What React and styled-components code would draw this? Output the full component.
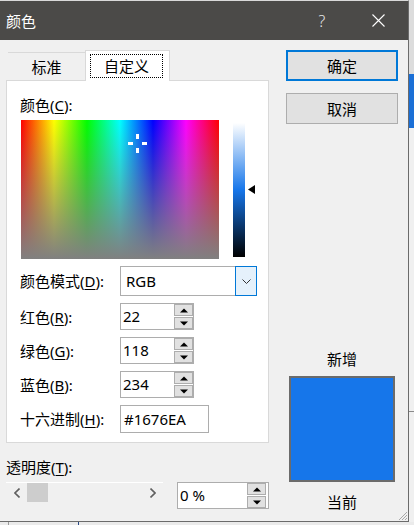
import React from "react";
import styled, { createGlobalStyle } from "styled-components";

const GlobalStyle = createGlobalStyle`
  html, body { margin: 0; padding: 0; }
  body {
    background: #e6e6e6;
    font-family: "Noto Sans", "Noto Sans CJK SC", sans-serif;
    color: #000;
  }
  * { box-sizing: border-box; }
`;

const Page = styled.div`
  width: 414px;
  height: 525px;
  overflow: hidden;
  display: grid;
  grid-template-columns: 409px 5px;
  grid-template-rows: 522px 3px;
`;

const Dialog = styled.div`
  position: relative;
  display: flex;
  flex-direction: column;
  background: #f0f0f0;
  border-top: 1px solid #d9d9d9;
  border-right: 1px solid #6b6b6b;
  border-bottom: 1px solid #6b6b6b;
`;

const TitleBar = styled.div`
  height: 39px;
  flex: none;
  display: flex;
  align-items: center;
  background: #4b4a48;
  color: #fff;
  padding: 0 2px 0 6px;
`;

const TitleText = styled.div`
  flex: 1;
  font-size: 15px;
  line-height: 18px;
`;

const TitleButton = styled.div`
  width: 56px;
  height: 39px;
  display: flex;
  align-items: center;
  justify-content: center;
  color: #e8e8e8;
  font-size: 16px;
  font-weight: 300;
`;

const Body = styled.div`
  flex: 1;
  display: flex;
  padding: 10px 10px 0 6px;
  gap: 17px;
`;

const LeftCol = styled.div`
  width: 263px;
  display: flex;
  flex-direction: column;
`;

const TabStrip = styled.div`
  height: 30px;
  display: flex;
  align-items: flex-end;
  padding-left: 2px;
  position: relative;
  z-index: 1;
`;

const Tab = styled.div`
  width: ${(p) => p.$w}px;
  height: ${(p) => (p.$active ? 31 : 28)}px;
  display: flex;
  font-size: 15px;
  line-height: 18px;
  background: ${(p) => (p.$active ? "#fff" : "transparent")};
  border-top: 1px solid #d9d9d9;
  border-left: ${(p) => (p.$active ? "1px solid #d9d9d9" : "none")};
  border-right: ${(p) => (p.$active ? "1px solid #d9d9d9" : "none")};
  margin-bottom: ${(p) => (p.$active ? -1 : 0)}px;
  padding: ${(p) => (p.$active ? "3px 6px 3px 4px" : "0")};
  align-items: center;
  justify-content: center;
`;

const FocusBox = styled.div`
  flex: 1;
  align-self: stretch;
  display: flex;
  align-items: center;
  justify-content: center;
  border: 1px dotted #000;
`;

const Panel = styled.div`
  height: 363px;
  background: #fff;
  border: 1px solid #d9d9d9;
  padding: 15px 0 0 13px;
  display: flex;
  flex-direction: column;
`;

const Label = styled.div`
  font-size: 15px;
  line-height: 18px;
  height: 18px;
  white-space: nowrap;
  u { text-underline-offset: 2px; }
`;

const PickerRow = styled.div`
  display: flex;
  align-items: flex-start;
  margin-top: 6px;
  padding-left: 1px;
`;

const Spectrum = styled.div`
  position: relative;
  width: 198px;
  height: 139px;
  background:
    linear-gradient(to bottom, rgba(128,128,128,0) 0%, rgba(128,128,128,1) 100%),
    linear-gradient(to right, #ff0000 0%, #ffff00 16.67%, #00ff00 33.33%, #00ffff 50%, #0000ff 66.67%, #ff00ff 83.33%, #ff0000 100%);
`;

const Crosshair = styled.svg`
  position: absolute;
  left: 107px;
  top: 14px;
`;

const LumBar = styled.div`
  width: 12px;
  height: 134px;
  margin: 3px 0 0 14px;
  background: linear-gradient(to bottom, #ffffff 0%, #1676ea 50%, #000000 100%);
`;

const LumArrow = styled.svg`
  margin: 65px 0 0 3px;
`;

const Form = styled.div`
  display: flex;
  flex-direction: column;
  gap: 7px;
  margin-top: 7px;
`;

const FormRow = styled.div`
  display: flex;
  align-items: center;
  height: ${(p) => p.$h}px;
`;

const FormLabel = styled(Label)`
  width: 100px;
`;

const SelectBox = styled.div`
  width: 137px;
  height: 30px;
  display: flex;
  border: 1px solid #adadad;
  background: #fff;
`;

const SelectText = styled.div`
  flex: 1;
  padding-left: 5px;
  font-size: 15px;
  line-height: 28px;
`;

const DropButton = styled.div`
  width: 22px;
  margin: -1px -1px -1px 0;
  border: 1px solid #0078d7;
  background: #e5f1fb;
  display: flex;
  align-items: center;
  justify-content: center;
`;

const SpinBox = styled.div`
  width: ${(p) => p.$w}px;
  height: 27px;
  display: flex;
  border: 1px solid #adadad;
  background: #fff;
  padding-right: ${(p) => p.$pr || 0}px;
`;

const SpinText = styled.div`
  flex: 1;
  padding-left: 2px;
  font-size: 15px;
  line-height: 25px;
`;

const SpinButtons = styled.div`
  width: 19px;
  display: flex;
  flex-direction: column;
  gap: 1px;
`;

const SpinButton = styled.div`
  flex: 1;
  border: 1px solid #adadad;
  background: #e1e1e1;
  display: flex;
  align-items: center;
  justify-content: center;
`;

const TextBox = styled.div`
  width: 89px;
  height: 28px;
  border: 1px solid #adadad;
  background: #fff;
  padding-left: 3px;
  font-size: 15px;
  line-height: 26px;
`;

const TransLabel = styled(Label)`
  margin-top: 15px;
`;

const TransRow = styled.div`
  display: flex;
  align-items: flex-start;
  gap: 14px;
  margin-top: 6px;
`;

const ScrollBar = styled.div`
  width: 159px;
  height: 21px;
  display: flex;
  border-top: 1px solid #fff;
  background: #f0f0f0;
`;

const ScrollArrow = styled.div`
  width: 21px;
  display: flex;
  align-items: center;
  justify-content: center;
`;

const ScrollThumb = styled.div`
  width: 21px;
  height: 19px;
  background: #cdcdcd;
`;

const ScrollTrack = styled.div`
  flex: 1;
`;

const RightCol = styled.div`
  width: 112px;
  display: flex;
  flex-direction: column;
`;

const Button = styled.div`
  height: 31px;
  display: flex;
  align-items: center;
  justify-content: center;
  font-size: 15px;
  background: #e1e1e1;
  border: ${(p) => (p.$default ? "2px solid #0078d7" : "1px solid #adadad")};
  margin-top: ${(p) => p.$mt || 0}px;
`;

const SwatchLabel = styled(Label)`
  text-align: center;
  margin-top: ${(p) => p.$mt}px;
  margin-left: 3px;
  width: 106px;
`;

const Swatch = styled.div`
  width: 106px;
  height: 106px;
  margin: 8px 0 0 3px;
  border: 2px solid #6b6b6b;
  background: #1676ea;
`;

const Grip = styled.svg`
  position: absolute;
  right: 0;
  bottom: 0;
`;

const Backdrop = styled.div`
  display: flex;
  flex-direction: column;
`;

const BackSeg = styled.div`
  height: ${(p) => (p.$h ? `${p.$h}px` : "auto")};
  flex: ${(p) => (p.$h ? "none" : 1)};
  background: ${(p) => p.$c};
`;

const BottomStrip = styled.div`
  grid-column: 1 / 3;
  display: flex;
  background: #ebebeb;
`;

const StripLine = styled.div`
  width: 1px;
  margin-left: ${(p) => p.$ml}px;
  background: ${(p) => p.$c};
`;

const Up = () => (
  <svg width="8" height="5" viewBox="0 0 8 5">
    <polygon points="0,4.5 8,4.5 4,0.5" fill="#000" />
  </svg>
);
const Down = () => (
  <svg width="8" height="5" viewBox="0 0 8 5">
    <polygon points="0,0.5 8,0.5 4,4.5" fill="#000" />
  </svg>
);

function Spin({ value, w = 74, pr = 0 }) {
  return (
    <SpinBox $w={w} $pr={pr}>
      <SpinText>{value}</SpinText>
      <SpinButtons>
        <SpinButton><Up /></SpinButton>
        <SpinButton><Down /></SpinButton>
      </SpinButtons>
    </SpinBox>
  );
}

export default function App() {
  return (
    <>
      <GlobalStyle />
      <Page>
        <Dialog>
          <TitleBar>
            <TitleText>颜色</TitleText>
            <TitleButton>?</TitleButton>
            <TitleButton>
              <svg width="13" height="13" viewBox="0 0 13 13">
                <path d="M0.5 0.5 L12.5 12.5 M12.5 0.5 L0.5 12.5" stroke="#fff" strokeWidth="1.1" />
              </svg>
            </TitleButton>
          </TitleBar>
          <Body>
            <LeftCol>
              <TabStrip>
                <Tab $w={77}>标准</Tab>
                <Tab $w={85} $active>
                  <FocusBox>自定义</FocusBox>
                </Tab>
              </TabStrip>
              <Panel>
                <Label>颜色(<u>C</u>):</Label>
                <PickerRow>
                  <Spectrum>
                    <Crosshair width="19" height="19" viewBox="0 0 19 19">
                      <rect x="8" y="0" width="3" height="5" fill="#fff" />
                      <rect x="8" y="14" width="3" height="5" fill="#fff" />
                      <rect x="0" y="8" width="5" height="3" fill="#fff" />
                      <rect x="14" y="8" width="5" height="3" fill="#fff" />
                    </Crosshair>
                  </Spectrum>
                  <LumBar />
                  <LumArrow width="7" height="9" viewBox="0 0 7 9">
                    <polygon points="0,4.5 7,0 7,9" fill="#000" />
                  </LumArrow>
                </PickerRow>
                <Form>
                  <FormRow $h={30}>
                    <FormLabel>颜色模式(<u>D</u>):</FormLabel>
                    <SelectBox>
                      <SelectText>RGB</SelectText>
                      <DropButton>
                        <svg width="9" height="5" viewBox="0 0 9 5">
                          <polyline points="0.5,0.5 4.5,4.5 8.5,0.5" fill="none" stroke="#333" strokeWidth="1" />
                        </svg>
                      </DropButton>
                    </SelectBox>
                  </FormRow>
                  <FormRow $h={27}>
                    <FormLabel>红色(<u>R</u>):</FormLabel>
                    <Spin value="22" />
                  </FormRow>
                  <FormRow $h={27}>
                    <FormLabel>绿色(<u>G</u>):</FormLabel>
                    <Spin value="118" />
                  </FormRow>
                  <FormRow $h={27}>
                    <FormLabel>蓝色(<u>B</u>):</FormLabel>
                    <Spin value="234" />
                  </FormRow>
                  <FormRow $h={28}>
                    <FormLabel>十六进制(<u>H</u>):</FormLabel>
                    <TextBox>#1676EA</TextBox>
                  </FormRow>
                </Form>
              </Panel>
              <TransLabel>透明度(<u>T</u>):</TransLabel>
              <TransRow>
                <ScrollBar>
                  <ScrollArrow>
                    <svg width="6" height="10" viewBox="0 0 6 10">
                      <polyline points="5.5,0.5 1,5 5.5,9.5" fill="none" stroke="#606060" strokeWidth="1.6" />
                    </svg>
                  </ScrollArrow>
                  <ScrollThumb />
                  <ScrollTrack />
                  <ScrollArrow>
                    <svg width="6" height="10" viewBox="0 0 6 10">
                      <polyline points="0.5,0.5 5,5 0.5,9.5" fill="none" stroke="#606060" strokeWidth="1.6" />
                    </svg>
                  </ScrollArrow>
                </ScrollBar>
                <Spin value="0 %" w={93} pr={2} />
              </TransRow>
            </LeftCol>
            <RightCol>
              <Button $default>确定</Button>
              <Button $mt={12}>取消</Button>
              <SwatchLabel $mt={226}>新增</SwatchLabel>
              <Swatch />
              <SwatchLabel $mt={11}>当前</SwatchLabel>
            </RightCol>
          </Body>
          <Grip width="11" height="11" viewBox="0 0 11 11">
            <path d="M10 2 L2 10 M10 5 L5 10 M10 8 L8 10" stroke="#a8a8a8" strokeWidth="1" />
          </Grip>
        </Dialog>
        <Backdrop>
          <BackSeg $h={74} $c="#dcdcdc" />
          <BackSeg $h={54} $c="#1b6fd6" />
          <BackSeg $h={283} $c="#f0f0f0" />
          <BackSeg $h={1} $c="#8a8a8a" />
          <BackSeg $c="#f0f0f0" />
        </Backdrop>
        <BottomStrip>
          <StripLine $ml={8} $c="#9a9a9a" />
          <StripLine $ml={69} $c="#2a4a86" />
        </BottomStrip>
      </Page>
    </>
  );
}
